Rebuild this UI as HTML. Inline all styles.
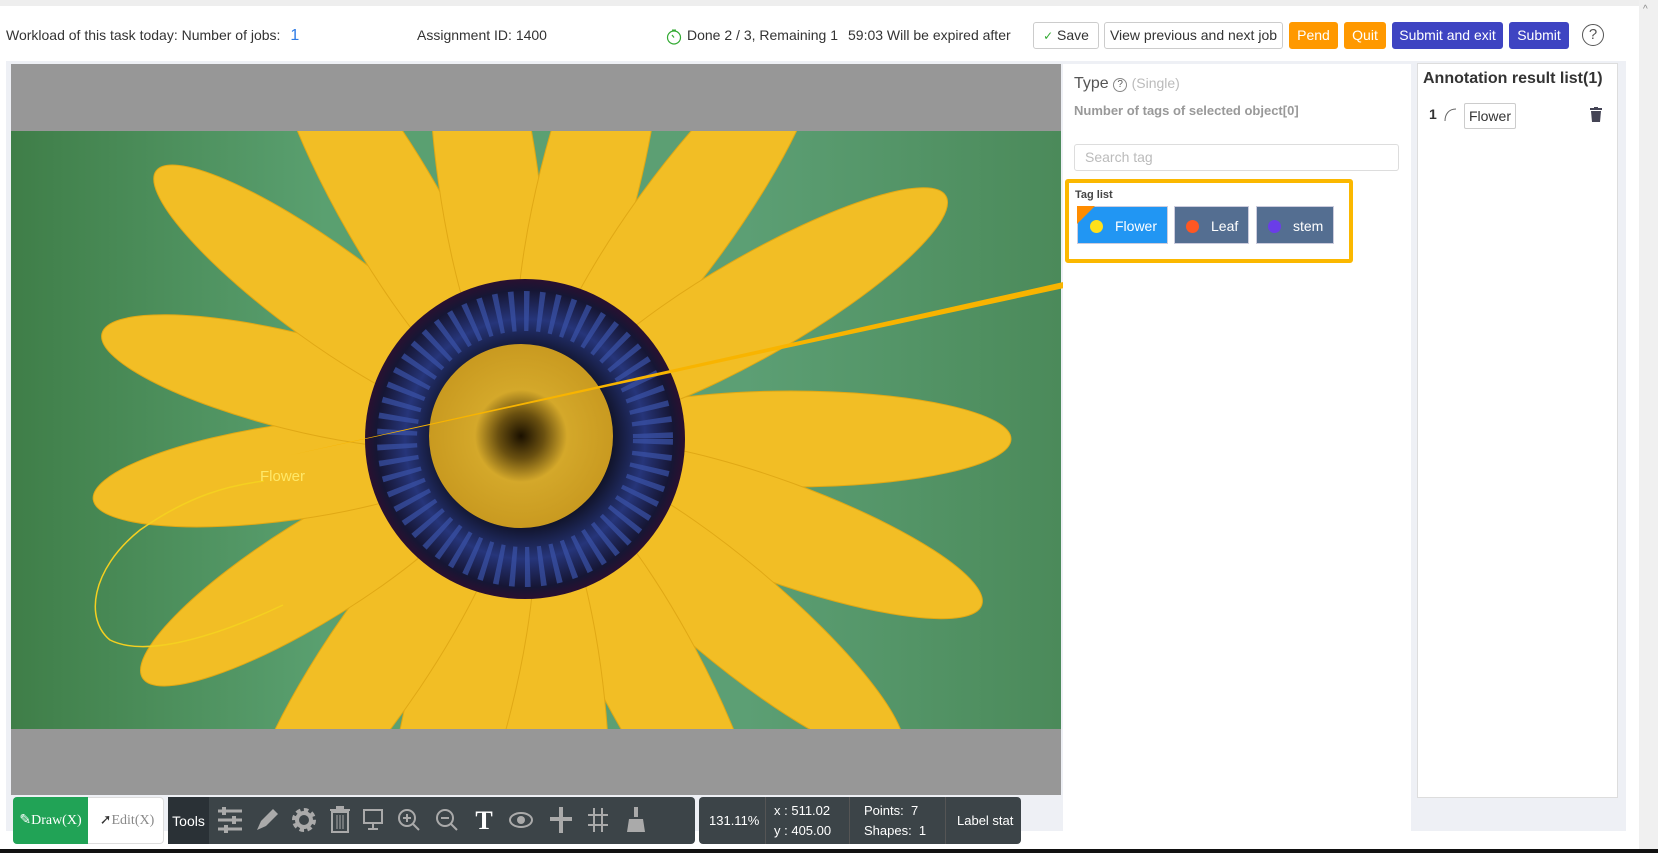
<!DOCTYPE html>
<html><head><meta charset="utf-8">
<style>
*{box-sizing:border-box;margin:0;padding:0}
body{width:1658px;height:853px;overflow:hidden;background:#fff;font-family:"Liberation Sans",Arial,sans-serif;font-size:14px;color:#333;position:relative}
.abs{position:absolute}
.btn{position:absolute;top:22px;height:27px;line-height:25px;border:1px solid #ccc;border-radius:3px;font-size:14px;text-align:center;background:#fff;color:#333}
.or{background:#f90;border-color:#f90;color:#fff}
.bl{background:#3e44c2;border-color:#3e44c2;color:#fff}
.tag{position:absolute;top:206px;height:38px;line-height:38px;color:#fff;font-size:14px;border:1px solid #ccd}
.dot{display:inline-block;width:13px;height:13px;border-radius:50%;vertical-align:-2px;margin-right:12px}
.tb{position:absolute;top:797px;height:47px;border-radius:4px}
.ic{position:absolute;top:0;height:47px;display:flex;align-items:center;justify-content:center;color:#999}
</style></head><body>
<div class="abs" style="left:0;top:0;width:1658px;height:6px;background:#eee"></div>
<div class="abs" style="left:1639px;top:0;width:19px;height:853px;background:#f0f0f0"></div>
<div class="abs" style="left:1628px;top:6px;width:11px;height:843px;background:#fff"></div>
<div class="abs" style="left:1643px;top:4px;font-size:10px;color:#888">^</div>
<div class="abs" style="left:0;top:849px;width:1658px;height:4px;background:#111"></div>

<div class="abs" style="left:6px;top:27px">Workload of this task today: Number of jobs: <span style="color:#2d7be5;font-size:16px;margin-left:6px">1</span></div>
<div class="abs" style="left:417px;top:27px">Assignment ID: 1400</div>
<svg class="abs" style="left:666px;top:28px" width="16" height="17" viewBox="0 0 16 17"><circle cx="8" cy="9.5" r="6.5" fill="none" stroke="#3a3" stroke-width="1.2"/><path d="M8 9.5 L6 7" stroke="#3a3" stroke-width="1.2"/><path d="M6 2h4" stroke="#3a3"/></svg>
<div class="abs" style="left:687px;top:27px">Done 2 / 3, Remaining 1</div>
<div class="abs" style="left:848px;top:27px">59:03 Will be expired after</div>
<div class="btn" style="left:1033px;width:66px"><span style="color:#3a3;font-size:12px">✓</span> Save</div>
<div class="btn" style="left:1104px;width:179px">View previous and next job</div>
<div class="btn or" style="left:1289px;width:49px">Pend</div>
<div class="btn or" style="left:1344px;width:42px">Quit</div>
<div class="btn bl" style="left:1392px;width:111px">Submit and exit</div>
<div class="btn bl" style="left:1509px;width:60px">Submit</div>
<div class="abs" style="left:1582px;top:24px;width:22px;height:22px;border:1px solid #555;border-radius:50%;text-align:center;line-height:20px;font-size:15px;color:#555">?</div>

<div class="abs" style="left:6px;top:61px;width:1620px;height:770px;background:#eef0f5"></div>
<div class="abs" style="left:11px;top:64px;width:1050px;height:731px;background:#979797"></div>
<svg class="abs" style="left:11px;top:131px" width="1050" height="598" viewBox="0 0 1050 598">
<defs>
<linearGradient id="bg" x1="0" x2="1" y1="0" y2="0"><stop offset="0" stop-color="#3f7e48"/><stop offset=".3" stop-color="#5aa070"/><stop offset=".7" stop-color="#5c9f74"/><stop offset="1" stop-color="#4b8a5a"/></linearGradient>
<radialGradient id="ring"><stop offset=".5" stop-color="#0c0c18"/><stop offset=".75" stop-color="#26357a"/><stop offset=".93" stop-color="#161634"/><stop offset="1" stop-color="#2a1030"/></radialGradient>
<radialGradient id="cen"><stop offset="0" stop-color="#1a1000"/><stop offset=".25" stop-color="#6a5010"/><stop offset=".5" stop-color="#d4a82a"/><stop offset="1" stop-color="#c99a20"/></radialGradient>
</defs>
<rect width="1050" height="598" fill="url(#bg)"/>
<g fill="#f2be25" stroke="#e0a815" stroke-width="1">
<ellipse cx="780" cy="308" rx="220" ry="48" transform="rotate(0 514 308)"/>
<ellipse cx="780" cy="308" rx="220" ry="50" transform="rotate(20 514 308)"/>
<ellipse cx="780" cy="308" rx="225" ry="50" transform="rotate(40 514 308)"/>
<ellipse cx="780" cy="308" rx="225" ry="52" transform="rotate(62 514 308)"/>
<ellipse cx="780" cy="308" rx="225" ry="52" transform="rotate(84 514 308)"/>
<ellipse cx="780" cy="308" rx="225" ry="52" transform="rotate(104 514 308)"/>
<ellipse cx="780" cy="308" rx="225" ry="52" transform="rotate(124 514 308)"/>
<ellipse cx="760" cy="308" rx="205" ry="50" transform="rotate(148 514 308)"/>
<ellipse cx="750" cy="308" rx="200" ry="48" transform="rotate(172 514 308)"/>
<ellipse cx="750" cy="308" rx="200" ry="48" transform="rotate(194 514 308)"/>
<ellipse cx="760" cy="308" rx="210" ry="48" transform="rotate(216 514 308)"/>
<ellipse cx="780" cy="308" rx="225" ry="50" transform="rotate(240 514 308)"/>
<ellipse cx="780" cy="308" rx="225" ry="50" transform="rotate(262 514 308)"/>
<ellipse cx="780" cy="308" rx="225" ry="50" transform="rotate(284 514 308)"/>
<ellipse cx="780" cy="308" rx="225" ry="50" transform="rotate(306 514 308)"/>
<ellipse cx="780" cy="308" rx="220" ry="50" transform="rotate(330 514 308)"/>
</g>
<circle cx="514" cy="308" r="160" fill="url(#ring)"/>
<circle cx="514" cy="308" r="128" fill="none" stroke="#3a52a8" stroke-width="40" stroke-dasharray="5 9" opacity=".7"/>
<circle cx="510" cy="305" r="92" fill="url(#cen)"/>
</svg>
<svg class="abs" style="left:0;top:0" width="1658" height="853">
<path d="M291 455 L1090 276 L1092 282 Z" fill="#f8b400"/>
<path d="M1075 262 L1126 270 L1084 286 Z" fill="#f8b400"/>
<path d="M283 605 C 230 630, 150 660, 110 640 C 85 620, 90 570, 140 530 C 190 495, 230 485, 264 481" stroke="#f5d020" stroke-width="1.5" fill="none"/>
</svg>
<div class="abs" style="left:260px;top:468px;color:#ffe868;font-size:15px">Flower</div>

<div class="abs" style="left:1063px;top:64px;width:348px;height:768px;background:#fff"></div>
<div class="abs" style="left:1074px;top:75px;font-size:16px;color:#555">Type <span style="display:inline-block;width:14px;height:14px;border:1px solid #888;border-radius:50%;font-size:10px;text-align:center;line-height:12px;vertical-align:1px">?</span> <span style="color:#bbb;font-size:14px">(Single)</span></div>
<div class="abs" style="left:1074px;top:103px;font-weight:bold;color:#999;font-size:13px">Number of tags of selected object[0]</div>
<div class="abs" style="left:1074px;top:144px;width:325px;height:27px;border:1px solid #ddd;border-radius:3px;padding-left:10px;line-height:25px;color:#bbb">Search tag</div>
<div class="abs" style="left:1065px;top:179px;width:288px;height:84px;border:4px solid #fbb800;border-radius:3px"></div>
<div class="abs" style="left:1075px;top:189px;font-size:11px;font-weight:bold;color:#444">Tag list</div>
<div class="tag" style="left:1077px;width:91px;background:#2196f3;padding-left:12px"><span class="dot" style="background:#ffe01a"></span>Flower</div>
<div class="abs" style="left:1077px;top:206px;width:0;height:0;border-top:18px solid #ff8c00;border-right:18px solid transparent"></div>
<div class="tag" style="left:1174px;width:75px;background:#546e91;padding-left:11px"><span class="dot" style="background:#ff5722"></span>Leaf</div>
<div class="tag" style="left:1256px;width:78px;background:#546e91;padding-left:11px"><span class="dot" style="background:#6a3de8"></span>stem</div>

<div class="abs" style="left:1417px;top:63px;width:201px;height:735px;background:#fff;border:1px solid #ddd"></div>
<div class="abs" style="left:1423px;top:70px;font-size:16px;font-weight:bold;color:#333">Annotation result list(1)</div>
<div class="abs" style="left:1429px;top:106px;font-weight:bold">1</div>
<svg class="abs" style="left:1442px;top:106px" width="16" height="16"><path d="M3 15 C3 8 7 3 14 3" stroke="#666" fill="none"/></svg>
<div class="abs" style="left:1464px;top:103px;width:52px;height:26px;border:1px solid #ccc;border-radius:2px;text-align:center;line-height:24px">Flower</div>
<svg class="abs" style="left:1590px;top:107px" width="12" height="15"><rect x="0" y="1" width="12" height="2" fill="#445"/><rect x="4" y="0" width="4" height="2" fill="#445"/><path d="M1 4h10l-1 11H2z" fill="#445"/></svg>

<div class="tb" style="left:13px;width:151px;background:#fff;border:1px solid #ddd"></div>
<div class="tb" style="left:13px;width:75px;background:#21a356;border-radius:4px 0 0 4px;color:#fff;font-family:'Liberation Serif',serif;font-size:14px;line-height:47px;text-align:center">✎Draw(X)</div>
<div class="tb" style="left:91px;width:72px;color:#888;font-family:'Liberation Serif',serif;font-size:14px;line-height:47px;text-align:center"><span style="color:#333">➚</span>Edit(X)</div>
<div class="tb" style="left:168px;width:527px;background:#3c4448">
<div class="ic" style="left:0;width:41px;background:#2a3136;color:#fff;font-size:14px">Tools</div>
<svg class="ic" style="left:48px" width="28" height="47" viewBox="0 0 28 47"><g stroke="#aaa" stroke-width="3"><path d="M2 14h24M2 23h24M2 32h24"/></g><g fill="#aaa"><rect x="6" y="10" width="4" height="8"/><rect x="16" y="19" width="4" height="8"/><rect x="8" y="28" width="4" height="8"/></g></svg>
<svg class="ic" style="left:86px" width="24" height="47" viewBox="0 0 24 47"><path d="M3 33l4-9 12-12 5 5-12 12z" fill="#aaa"/></svg>
<svg class="ic" style="left:124px" width="24" height="47" viewBox="0 0 24 47"><circle cx="12" cy="23" r="9" fill="none" stroke="#aaa" stroke-width="6" stroke-dasharray="4 3"/><circle cx="12" cy="23" r="7" fill="none" stroke="#aaa" stroke-width="4"/></svg>
<svg class="ic" style="left:160px" width="24" height="47" viewBox="0 0 24 47"><rect x="2" y="12" width="20" height="2" fill="#aaa"/><rect x="8" y="9" width="8" height="3" fill="#aaa"/><path d="M4 15h16v20H4z" fill="none" stroke="#aaa" stroke-width="2"/><path d="M9 18v14M12 18v14M15 18v14" stroke="#aaa"/></svg>
<svg class="ic" style="left:193px" width="24" height="47" viewBox="0 0 24 47"><rect x="3" y="13" width="18" height="13" fill="none" stroke="#aaa" stroke-width="2"/><path d="M12 26v5M7 32h10" stroke="#aaa" stroke-width="2"/></svg>
<svg class="ic" style="left:229px" width="24" height="47" viewBox="0 0 24 47"><circle cx="10" cy="21" r="8" fill="none" stroke="#aaa" stroke-width="2"/><path d="M16 27l6 6M6 21h8M10 17v8" stroke="#aaa" stroke-width="2"/></svg>
<svg class="ic" style="left:267px" width="24" height="47" viewBox="0 0 24 47"><circle cx="10" cy="21" r="8" fill="none" stroke="#aaa" stroke-width="2"/><path d="M16 27l6 6M6 21h8" stroke="#aaa" stroke-width="2"/></svg>
<div class="ic" style="left:303px;width:26px;color:#fff;font-size:26px;font-weight:bold;font-family:'Liberation Serif',serif">T</div>
<svg class="ic" style="left:340px" width="26" height="47" viewBox="0 0 26 47"><ellipse cx="13" cy="23" rx="11" ry="7" fill="none" stroke="#aaa" stroke-width="2"/><circle cx="13" cy="23" r="4" fill="#aaa"/></svg>
<svg class="ic" style="left:380px" width="26" height="47" viewBox="0 0 26 47"><path d="M13 10v26M2 22h22" stroke="#aaa" stroke-width="4"/></svg>
<svg class="ic" style="left:418px" width="24" height="47" viewBox="0 0 24 47"><path d="M8 11v24M16 11v24M2 18h20M2 28h20" stroke="#aaa" stroke-width="2"/></svg>
<svg class="ic" style="left:456px" width="24" height="47" viewBox="0 0 24 47"><rect x="10" y="10" width="4" height="10" fill="#aaa"/><path d="M5 22h14l2 13H3z" fill="#aaa"/></svg>
</div>
<div class="tb" style="left:699px;width:322px;background:#3c4448;color:#fff;font-size:13px">
<div class="abs" style="left:10px;top:16px">131.11%</div>
<div class="abs" style="left:66px;top:0;width:1px;height:47px;background:#555"></div>
<div class="abs" style="left:75px;top:6px">x : 511.02</div>
<div class="abs" style="left:75px;top:26px">y : 405.00</div>
<div class="abs" style="left:150px;top:0;width:1px;height:47px;background:#555"></div>
<div class="abs" style="left:165px;top:6px">Points:&nbsp; 7</div>
<div class="abs" style="left:165px;top:26px">Shapes:&nbsp; 1</div>
<div class="abs" style="left:246px;top:0;width:1px;height:47px;background:#555"></div>
<div class="abs" style="left:258px;top:16px">Label stat</div>
</div>
</body></html>
